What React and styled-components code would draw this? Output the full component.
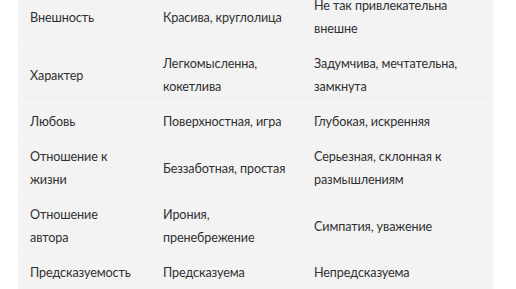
import React from "react";
import styled, { createGlobalStyle } from "styled-components";

const rows = [
  ["Внешность", "Красива, круглолица", "Не так привлекательна внешне"],
  ["Характер", "Легкомысленна, кокетлива", "Задумчива, мечтательна, замкнута"],
  ["Любовь", "Поверхностная, игра", "Глубокая, искренняя"],
  ["Отношение к жизни", "Беззаботная, простая", "Серьезная, склонная к размышлениям"],
  ["Отношение автора", "Ирония, пренебрежение", "Симпатия, уважение"],
  ["Предсказуемость", "Предсказуема", "Непредсказуема"],
];

const widths = [133, 151, 191];

const GlobalStyle = createGlobalStyle`
  body {
    margin: 0;
    background: #ffffff;
    overflow: hidden;
  }
`;

const Page = styled.div`
  padding: 0 23px 0 18px;
  margin-top: -12px;
`;

const Table = styled.table`
  width: 475px;
  border-collapse: collapse;
  table-layout: fixed;
  background: #f3f3f3;
  font-family: Lato, "Noto Sans", sans-serif;
  font-size: 12.6px;
  letter-spacing: -0.1px;
  line-height: 23px;
  color: #303030;
`;

const Col = styled.col`
  width: ${(p) => p.$w}px;
`;

const Row = styled.tr`
  border-bottom: 1px solid #f8f8f8;
`;

const Cell = styled.td`
  padding: 6px 12px 5px;
  vertical-align: middle;
  text-align: left;
`;

export default function App() {
  return (
    <>
      <GlobalStyle />
      <Page>
        <Table>
          <colgroup>
            {widths.map((w, i) => (
              <Col key={i} $w={w} />
            ))}
          </colgroup>
          <tbody>
            {rows.map((r) => (
              <Row key={r[0]}>
                {r.map((c) => (
                  <Cell key={c}>{c}</Cell>
                ))}
              </Row>
            ))}
          </tbody>
        </Table>
      </Page>
    </>
  );
}
